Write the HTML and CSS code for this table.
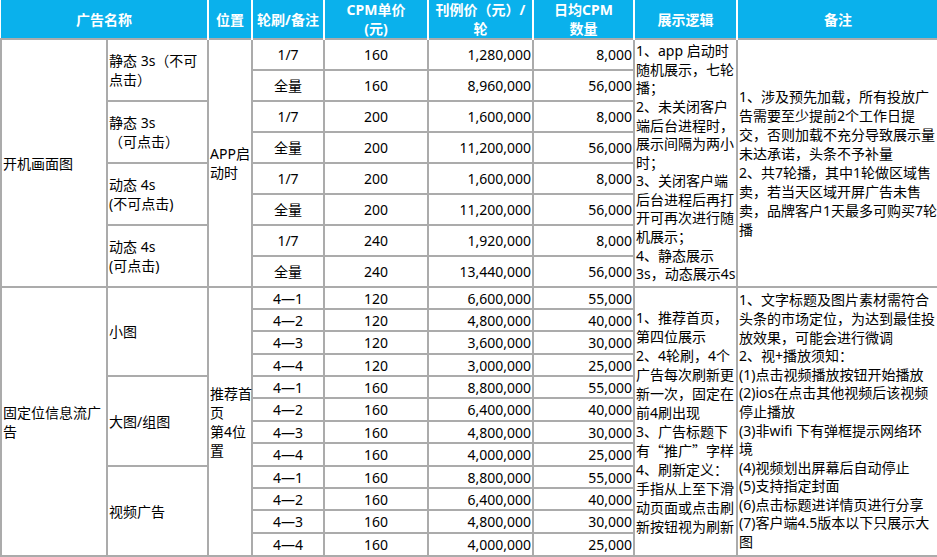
FILE: index.html
```html
<!DOCTYPE html>
<html lang="zh-CN">
<head>
<meta charset="utf-8">
<title>广告价格表</title>
<link rel="stylesheet" href="styles.css">
</head>
<body>
<table class="rt">
  <colgroup>
    <col class="w-name"><col class="w-sub"><col class="w-pos"><col class="w-turn">
    <col class="w-cpm"><col class="w-price"><col class="w-qty"><col class="w-logic"><col class="w-note">
  </colgroup>
  <thead>
    <tr class="hrow">
      <th colspan="2">广告名称</th>
      <th>位置</th>
      <th>轮刷/备注</th>
      <th>CPM单价<br>(元)</th>
      <th>刊例价（元）/<br>轮</th>
      <th>日均CPM<br>数量</th>
      <th>展示逻辑</th>
      <th>备注</th>
    </tr>
  </thead>
  <tbody class="s1">
    <tr>
      <td rowspan="8" class="l">开机画面图</td>
      <td rowspan="2" class="l">静态 3s（不可<br>点击）</td>
      <td rowspan="8" class="l">APP启<br>动时</td>
      <td class="c">1/7</td><td class="c">160</td><td class="r">1,280,000</td><td class="r">8,000</td>
      <td rowspan="8" class="l tight">1、app 启动时<br>随机展示，七轮<br>播；<br>2、未关闭客户<br>端后台进程时，<br>展示间隔为两小<br>时；<br>3、关闭客户端<br>后台进程后再打<br>开可再次进行随<br>机展示；<br>4、静态展示<br>3s，动态展示4s</td>
      <td rowspan="8" class="l">1、涉及预先加载，所有投放广<br>告需要至少提前2个工作日提<br>交，否则加载不充分导致展示量<br>未达承诺，头条不予补量<br>2、共7轮播，其中1轮做区域售<br>卖，若当天区域开屏广告未售<br>卖，品牌客户1天最多可购买7轮<br>播</td>
    </tr>
    <tr><td class="c">全量</td><td class="c">160</td><td class="r">8,960,000</td><td class="r">56,000</td></tr>
    <tr>
      <td rowspan="2" class="l">静态 3s<br>（可点击）</td>
      <td class="c">1/7</td><td class="c">200</td><td class="r">1,600,000</td><td class="r">8,000</td>
    </tr>
    <tr><td class="c">全量</td><td class="c">200</td><td class="r">11,200,000</td><td class="r">56,000</td></tr>
    <tr>
      <td rowspan="2" class="l">动态 4s<br>(不可点击)</td>
      <td class="c">1/7</td><td class="c">200</td><td class="r">1,600,000</td><td class="r">8,000</td>
    </tr>
    <tr><td class="c">全量</td><td class="c">200</td><td class="r">11,200,000</td><td class="r">56,000</td></tr>
    <tr>
      <td rowspan="2" class="l">动态 4s<br>(可点击)</td>
      <td class="c">1/7</td><td class="c">240</td><td class="r">1,920,000</td><td class="r">8,000</td>
    </tr>
    <tr><td class="c">全量</td><td class="c">240</td><td class="r">13,440,000</td><td class="r">56,000</td></tr>
  </tbody>
  <tbody class="s2">
    <tr class="a">
      <td rowspan="12" class="l">固定位信息流广<br>告</td>
      <td rowspan="4" class="l">小图</td>
      <td rowspan="12" class="l">推荐首<br>页<br>第4位<br>置</td>
      <td class="c">4—1</td><td class="c">120</td><td class="r">6,600,000</td><td class="r">55,000</td>
      <td rowspan="12" class="l">1、推荐首页，<br>第四位展示<br>2、4轮刷，4个<br>广告每次刷新更<br>新一次，固定在<br>前4刷出现<br>3、广告标题下<br>有<span class="cjk">“</span>推广<span class="cjk">”</span>字样<br>4、刷新定义：<br>手指从上至下滑<br>动页面或点击刷<br>新按钮视为刷新</td>
      <td rowspan="12" class="l tight">1、文字标题及图片素材需符合<br>头条的市场定位，为达到最佳投<br>放效果，可能会进行微调<br>2、视+播放须知：<br>(1)点击视频播放按钮开始播放<br>(2)ios在点击其他视频后该视频<br>停止播放<br>(3)非wifi 下有弹框提示网络环<br>境<br>(4)视频划出屏幕后自动停止<br>(5)支持指定封面<br>(6)点击标题进详情页进行分享<br>(7)客户端4.5版本以下只展示大<br>图</td>
    </tr>
    <tr class="a"><td class="c">4—2</td><td class="c">120</td><td class="r">4,800,000</td><td class="r">40,000</td></tr>
    <tr class="b"><td class="c">4—3</td><td class="c">120</td><td class="r">3,600,000</td><td class="r">30,000</td></tr>
    <tr class="a"><td class="c">4—4</td><td class="c">120</td><td class="r">3,000,000</td><td class="r">25,000</td></tr>
    <tr class="a">
      <td rowspan="4" class="l">大图/组图</td>
      <td class="c">4—1</td><td class="c">160</td><td class="r">8,800,000</td><td class="r">55,000</td>
    </tr>
    <tr class="b"><td class="c">4—2</td><td class="c">160</td><td class="r">6,400,000</td><td class="r">40,000</td></tr>
    <tr class="a"><td class="c">4—3</td><td class="c">160</td><td class="r">4,800,000</td><td class="r">30,000</td></tr>
    <tr class="b"><td class="c">4—4</td><td class="c">160</td><td class="r">4,000,000</td><td class="r">25,000</td></tr>
    <tr class="a">
      <td rowspan="4" class="l">视频广告</td>
      <td class="c">4—1</td><td class="c">160</td><td class="r">8,800,000</td><td class="r">55,000</td>
    </tr>
    <tr class="a"><td class="c">4—2</td><td class="c">160</td><td class="r">6,400,000</td><td class="r">40,000</td></tr>
    <tr class="b"><td class="c">4—3</td><td class="c">160</td><td class="r">4,800,000</td><td class="r">30,000</td></tr>
    <tr class="b"><td class="c">4—4</td><td class="c">160</td><td class="r">4,000,000</td><td class="r">25,000</td></tr>
  </tbody>
</table>
</body>
</html>
```

FILE: styles.css
```css
html, body {
  margin: 0;
  padding: 0;
  background: #fff;
}

body {
  font-family: "Noto Sans", "Noto Sans CJK SC", sans-serif;
  font-size: 14px;
  line-height: 19px;
  color: #000;
}

.rt {
  border-collapse: collapse;
  table-layout: fixed;
  width: 937px;
}

.w-name { width: 106px; }
.w-sub { width: 101px; }
.w-pos { width: 44px; }
.w-turn { width: 72px; }
.w-cpm { width: 104px; }
.w-price { width: 105px; }
.w-qty { width: 101px; }
.w-logic { width: 103px; }
.w-note { width: 201px; }

.rt th {
  background: #0ab1ec;
  color: #fff;
  font-weight: bold;
  text-align: center;
  vertical-align: middle;
  padding: 0;
  border-left: 2px solid #fff;
  border-right: 2px solid #fff;
  border-top: none;
  border-bottom: none;
  white-space: nowrap;
}

.rt th:first-child { border-left: none; }
.rt th:last-child { border-right: none; }

.hrow { height: 39px; }

.rt td {
  border: 2px solid #ababab;
  padding: 0 1px;
  vertical-align: middle;
  white-space: nowrap;
}

.rt td.tight { line-height: 18.6px; }

.s1 tr { height: 31px; }
.s2 tr.a { height: 22px; }
.s2 tr.b { height: 23px; }

.c { text-align: center; }
.r { text-align: right; }
.l { text-align: left; }

.cjk { font-family: "Noto Sans CJK SC", sans-serif; }
```
